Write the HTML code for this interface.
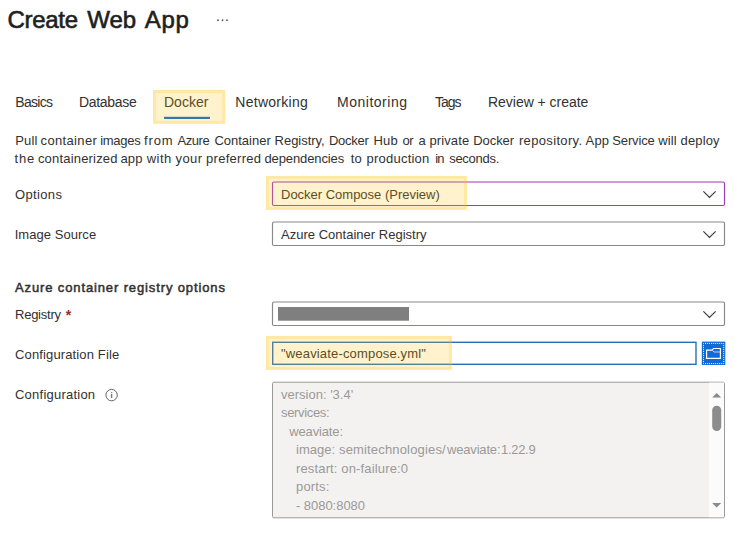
<!DOCTYPE html>
<html lang="en">
<head>
<meta charset="utf-8">
<title>Create Web App</title>
<style>
html,body{margin:0;padding:0;background:#fff;}
body{width:735px;height:536px;position:relative;overflow:hidden;font-family:"Liberation Sans",sans-serif;color:#323130;font-size:13px;}
.t{position:absolute;white-space:pre;color:#323130;}
.abs{position:absolute;}
p,h1{margin:0;font-weight:normal;font-size:inherit;}
</style>
</head>
<body>
<svg class="abs" id="shapes" style="left:0;top:0" width="735" height="536" viewBox="0 0 735 536">
<!-- tab underline -->
<rect x="164" y="116.8" width="46" height="2.2" fill="#006ad8"/>
<!-- ellipsis -->
<circle cx="218" cy="20.3" r="0.95" fill="#605e5c"/><circle cx="222.5" cy="20.3" r="0.95" fill="#605e5c"/><circle cx="227" cy="20.3" r="0.95" fill="#605e5c"/>
<!-- select boxes -->
<rect x="272.5" y="182" width="452" height="23.5" rx="1.5" fill="#fff" stroke="#9a3cb4" stroke-width="1.15"/>
<rect x="272.5" y="222" width="452" height="23.5" rx="1.5" fill="#fff" stroke="#8a8886" stroke-width="1.15"/>
<rect x="272.5" y="302" width="452" height="23.5" rx="1.5" fill="#fff" stroke="#8a8886" stroke-width="1.15"/>
<rect x="272.7" y="342.3" width="423.3" height="22" fill="#fff" stroke="#2c6fb6" stroke-width="1.4"/>
<!-- chevrons -->
<path d="M703.4 191.3 L709.5 197.4 L715.6 191.3" fill="none" stroke="#3b3a39" stroke-width="1.15"/>
<path d="M703.4 231.3 L709.5 237.4 L715.6 231.3" fill="none" stroke="#3b3a39" stroke-width="1.15"/>
<path d="M703.4 311.3 L709.5 317.4 L715.6 311.3" fill="none" stroke="#3b3a39" stroke-width="1.15"/>
<!-- redacted value -->
<rect x="278" y="307" width="131" height="13.7" fill="#7f7f7f"/>
<!-- browse button -->
<rect x="701.8" y="341.6" width="23.5" height="23.4" fill="#0f6cd6"/>
<rect x="703.5" y="343.4" width="20.2" height="20.2" fill="none" stroke="#fff" stroke-width="1" stroke-dasharray="1 1.02" stroke-dashoffset="0.5"/>
<path d="M706.6 350.1 H712.2 L713.5 348.5 H720.4 V358.3 H706.6 Z" fill="none" stroke="#fff" stroke-width="1.15"/>
<path d="M712.2 350.1 L714 352 H720.4" fill="none" stroke="#cfe2f7" stroke-width="0.9"/>
<!-- info icon -->
<circle cx="111.6" cy="395.1" r="5.7" fill="none" stroke="#605e5c" stroke-width="0.95"/>
<rect x="110.9" y="393.9" width="1.4" height="4" fill="#7a7876"/><rect x="110.9" y="392.1" width="1.4" height="1" fill="#8a8886"/>
<!-- configuration textarea -->
<rect x="272.5" y="382.2" width="452" height="135.6" rx="1.5" fill="#f3f2f1" stroke="#9c9a98" stroke-width="1"/>
<rect x="709" y="382.6" width="15" height="134.6" fill="#fbfbfb"/>
<path d="M712.2 397.5 L716.7 393.1 L721.2 397.5 Z" fill="#8a8a8a"/>
<rect x="712.2" y="405.8" width="9" height="25.2" rx="4.5" fill="#8c8c8c"/>
<path d="M712.2 503 L721.2 503 L716.7 507.4 Z" fill="#8a8a8a"/>
</svg>

<h1 id="title">
<span class="t" id="ttl1" style="left:7.40px;top:8.08px;font-size:24px;line-height:24px;letter-spacing:-0.280px;color:#201f1e;-webkit-text-stroke:0.6px #201f1e;">Create </span>
<span class="t" id="ttl2" style="left:87.30px;top:8.08px;font-size:24px;line-height:24px;letter-spacing:0.000px;color:#201f1e;-webkit-text-stroke:0.6px #201f1e;">Web </span>
<span class="t" id="ttl3" style="left:144.70px;top:8.08px;font-size:24px;line-height:24px;letter-spacing:0.700px;color:#201f1e;-webkit-text-stroke:0.6px #201f1e;">App</span>
</h1>
<div class="t" id="t1" style="left:15.30px;top:95.00px;font-size:14px;line-height:14px;letter-spacing:-0.700px;">Basics</div>
<div class="t" id="t2" style="left:79.00px;top:95.00px;font-size:14px;line-height:14px;letter-spacing:-0.314px;">Database</div>
<div class="t" id="t3" style="left:164.00px;top:95.00px;font-size:14px;line-height:14px;letter-spacing:0.000px;">Docker</div>
<div class="t" id="t4" style="left:235.30px;top:95.00px;font-size:14px;line-height:14px;letter-spacing:0.270px;">Networking</div>
<div class="t" id="t5" style="left:337.00px;top:95.00px;font-size:14px;line-height:14px;letter-spacing:0.511px;">Monitoring</div>
<div class="t" id="t6" style="left:435.00px;top:95.00px;font-size:14px;line-height:14px;letter-spacing:-1.000px;">Tags</div>
<div class="t" id="t7" style="left:488.00px;top:95.00px;font-size:14px;line-height:14px;letter-spacing:-0.029px;">Review + create</div>
<p id="intro">
<span class="t" id="p1w0" style="left:15.30px;top:134.40px;font-size:13px;line-height:13px;letter-spacing:0.130px;">Pull </span>
<span class="t" id="p1w1" style="left:40.60px;top:134.40px;font-size:13px;line-height:13px;letter-spacing:0.343px;">container </span>
<span class="t" id="p1w2" style="left:100.20px;top:134.40px;font-size:13px;line-height:13px;letter-spacing:-0.270px;">images </span>
<span class="t" id="p1w3" style="left:144.10px;top:134.40px;font-size:13px;line-height:13px;letter-spacing:0.800px;">from </span>
<span class="t" id="p1w4" style="left:177.50px;top:134.40px;font-size:13px;line-height:13px;letter-spacing:-0.445px;">Azure </span>
<span class="t" id="p1w5" style="left:214.40px;top:134.40px;font-size:13px;line-height:13px;letter-spacing:0.005px;">Container </span>
<span class="t" id="p1w6" style="left:274.60px;top:134.40px;font-size:13px;line-height:13px;letter-spacing:-0.033px;">Registry, </span>
<span class="t" id="p1w7" style="left:328.90px;top:134.40px;font-size:13px;line-height:13px;letter-spacing:-0.270px;">Docker </span>
<span class="t" id="p1w8" style="left:373.50px;top:134.40px;font-size:13px;line-height:13px;letter-spacing:0.130px;">Hub </span>
<span class="t" id="p1w9" style="left:402.60px;top:134.40px;font-size:13px;line-height:13px;letter-spacing:-0.470px;">or </span>
<span class="t" id="p1w10" style="left:418.60px;top:134.40px;font-size:13px;line-height:13px;letter-spacing:0.130px;">a </span>
<span class="t" id="p1w11" style="left:429.40px;top:134.40px;font-size:13px;line-height:13px;letter-spacing:0.130px;">private </span>
<span class="t" id="p1w12" style="left:473.30px;top:134.40px;font-size:13px;line-height:13px;letter-spacing:-0.090px;">Docker </span>
<span class="t" id="p1w13" style="left:518.90px;top:134.40px;font-size:13px;line-height:13px;letter-spacing:0.350px;">repository. </span>
<span class="t" id="p1w14" style="left:585.60px;top:134.40px;font-size:13px;line-height:13px;letter-spacing:0.130px;">App </span>
<span class="t" id="p1w15" style="left:612.30px;top:134.40px;font-size:13px;line-height:13px;letter-spacing:-0.137px;">Service </span>
<span class="t" id="p1w16" style="left:658.20px;top:134.40px;font-size:13px;line-height:13px;letter-spacing:0.130px;">will </span>
<span class="t" id="p1w17" style="left:680.60px;top:134.40px;font-size:13px;line-height:13px;letter-spacing:0.130px;">deploy</span>
<span class="t" id="p2w0" style="left:14.50px;top:152.00px;font-size:13px;line-height:13px;letter-spacing:0.790px;">the </span>
<span class="t" id="p2w1" style="left:37.90px;top:152.00px;font-size:13px;line-height:13px;letter-spacing:0.190px;">containerized </span>
<span class="t" id="p2w2" style="left:120.40px;top:152.00px;font-size:13px;line-height:13px;letter-spacing:0.190px;">app </span>
<span class="t" id="p2w3" style="left:146.70px;top:152.00px;font-size:13px;line-height:13px;letter-spacing:0.490px;">with </span>
<span class="t" id="p2w4" style="left:175.40px;top:152.00px;font-size:13px;line-height:13px;letter-spacing:0.487px;">your </span>
<span class="t" id="p2w5" style="left:206.10px;top:152.00px;font-size:13px;line-height:13px;letter-spacing:0.277px;">preferred </span>
<span class="t" id="p2w6" style="left:264.40px;top:152.00px;font-size:13px;line-height:13px;letter-spacing:-0.101px;">dependencies </span>
<span class="t" id="p2w7" style="left:350.70px;top:152.00px;font-size:13px;line-height:13px;letter-spacing:0.190px;">to </span>
<span class="t" id="p2w8" style="left:366.50px;top:152.00px;font-size:13px;line-height:13px;letter-spacing:0.234px;">production </span>
<span class="t" id="p2w9" style="left:435.30px;top:152.00px;font-size:13px;line-height:13px;letter-spacing:-1.010px;">in </span>
<span class="t" id="p2w10" style="left:449.20px;top:152.00px;font-size:13px;line-height:13px;letter-spacing:-0.281px;">seconds.</span>
</p>
<div class="t" id="l1" style="left:15.00px;top:188.00px;font-size:13px;line-height:13px;letter-spacing:0.360px;">Options</div>
<div class="t" id="l2" style="left:14.70px;top:228.00px;font-size:13px;line-height:13px;letter-spacing:0.045px;">Image Source</div>
<div class="t" id="h2" style="left:15.00px;top:281.00px;font-size:13px;line-height:13px;letter-spacing:0.874px;-webkit-text-stroke:0.5px #323130;">Azure container registry options</div>
<div class="t" id="l3" style="left:15.00px;top:308.00px;font-size:13px;line-height:13px;letter-spacing:-0.243px;">Registry</div>
<div class="t" id="l3s" style="left:65.70px;top:307.55px;font-size:14px;line-height:14px;letter-spacing:0.000px;color:#a4262c;font-weight:bold;">*</div>
<div class="t" id="l4" style="left:15.00px;top:348.00px;font-size:13px;line-height:13px;letter-spacing:0.135px;">Configuration File</div>
<div class="t" id="l5" style="left:15.00px;top:388.00px;font-size:13px;line-height:13px;letter-spacing:0.229px;">Configuration</div>
<div class="t" id="s1t" style="left:281.00px;top:188.00px;font-size:13px;line-height:13px;letter-spacing:-0.009px;">Docker Compose (Preview)</div>
<div class="t" id="s2t" style="left:281.00px;top:228.00px;font-size:13px;line-height:13px;letter-spacing:0.013px;">Azure Container Registry</div>
<div class="t" id="s4t" style="left:281.00px;top:347.00px;font-size:13px;line-height:13px;letter-spacing:0.167px;">"weaviate-compose.yml"</div>
<div id="config-text">
<span class="t" id="c1" style="left:281.00px;top:388.00px;font-size:13px;line-height:13px;letter-spacing:0.000px;color:#9b9997;">version: '3.4'</span>
<span class="t" id="c2" style="left:281.00px;top:406.40px;font-size:13px;line-height:13px;letter-spacing:-0.338px;color:#9b9997;">services:</span>
<span class="t" id="c3" style="left:289.30px;top:424.80px;font-size:13px;line-height:13px;letter-spacing:-0.150px;color:#9b9997;">weaviate:</span>
<span class="t" id="c4a" style="left:296.00px;top:443.20px;font-size:13px;line-height:13px;letter-spacing:0.000px;color:#9b9997;">image: </span>
<span class="t" id="c4b" style="left:339.00px;top:443.20px;font-size:13px;line-height:13px;letter-spacing:0.163px;color:#9b9997;">semitechnologies/</span>
<span class="t" id="c4c" style="left:447.00px;top:443.20px;font-size:13px;line-height:13px;letter-spacing:-0.175px;color:#9b9997;">weaviate:</span>
<span class="t" id="c4d" style="left:501.00px;top:443.20px;font-size:13px;line-height:13px;letter-spacing:-0.300px;color:#9b9997;">1.22.9</span>
<span class="t" id="c5" style="left:296.00px;top:461.60px;font-size:13px;line-height:13px;letter-spacing:0.145px;color:#9b9997;">restart: on-failure:0</span>
<span class="t" id="c6" style="left:296.00px;top:480.00px;font-size:13px;line-height:13px;letter-spacing:0.180px;color:#9b9997;">ports:</span>
<span class="t" id="c7" style="left:296.00px;top:498.50px;font-size:13px;line-height:13px;letter-spacing:-0.040px;color:#9b9997;">- 8080:8080</span>
</div>
<svg class="abs" id="highlights" style="left:0;top:0" width="735" height="536" viewBox="0 0 735 536">
<g fill="rgba(255,192,0,0.20)">
<rect x="156" y="93" width="66.2" height="27.8"/>
<rect x="268.9" y="178.9" width="195" height="28"/>
<rect x="268.9" y="338.9" width="180" height="28"/>
</g>
<g fill="none" stroke="rgba(255,192,0,0.37)" stroke-width="3">
<rect x="154.5" y="91.5" width="69.2" height="30.8"/>
<rect x="267.4" y="177.4" width="198" height="31"/>
<rect x="267.4" y="337.4" width="183" height="31"/>
</g>
</svg>
</body>
</html>
